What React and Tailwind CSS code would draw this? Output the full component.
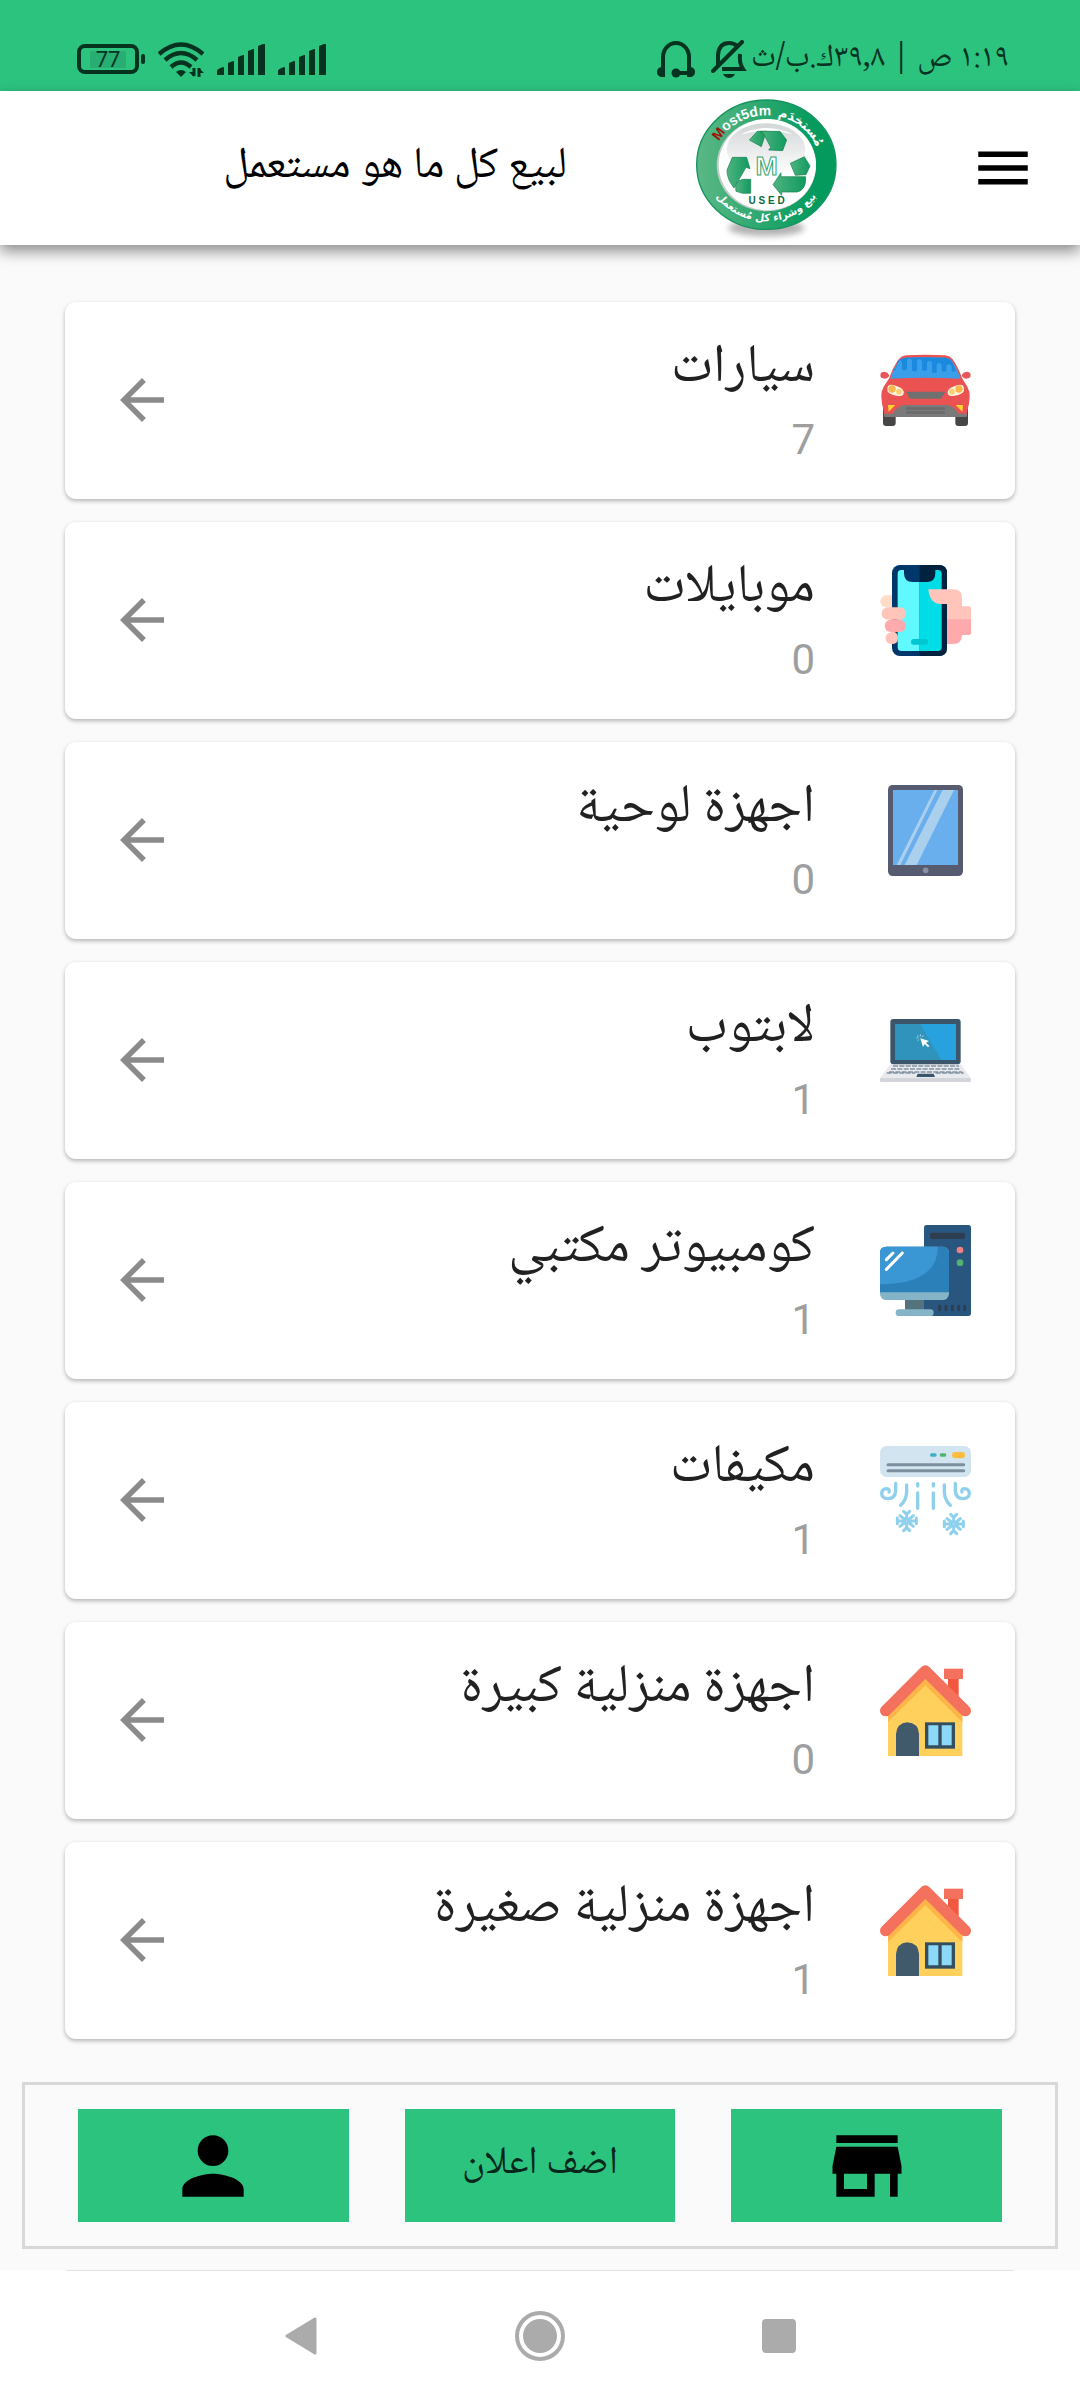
import { MdArrowBack, MdMenu, MdPerson, MdStore } from "react-icons/md";

function Car() {
  return (
    <svg viewBox="60 45 273 273" className="size-[91px] shrink-0" aria-hidden="true">
      <path d="M69 235h38v44q0 9-9 9H78q-9 0-9-9zM286 235h38v44q0 9-9 9h-20q-9 0-9-9z" fill="#464646" />
      <path d="M88 138q-6 8-14 8-13 0-13-10 0-11 12-11 12 1 15 13zM305 138q6 8 14 8 13 0 13-10 0-11-12-11-12 1-15 13z" fill="#e8575c" />
      <path d="M88 144q12-34 28-56 8-10 22-12 58-4 118 0 14 2 22 12 16 22 28 56l16 26q8 14 7 30-1 22-7 42l-2 18H73l-2-18q-6-20-7-42-1-16 7-30z" fill="#eb5252" />
      <path d="M91 146q10-32 26-54 7-8 18-9 61-3 122 0 11 1 18 9 16 22 26 54-104-6-210 0z" fill="#3a9fea" />
      <path d="M105 122q4-20 15-33 6-5 15-6 61-3 122 0 9 1 15 6 9 13 15 33-10 6-12 0v-14q-8-12-16 0v14q-6 6-14 0v-18q-8-12-15 0v22q-6 6-14 0v-28q-7-12-15 0v22q-7 6-15 0v-27q-8-12-15 0v28q-8 8-15 0v-30q-8-12-15 0v26q-8 8-15 0v-22q-8-10-15 0v15q-8 10-16 7z" fill="#1b8ade" />
      <path d="M82 182q-2-22 18-17 20 5 27 13 6 6 3 15-3 8-20 4-24-4-28-15zM312 182q2-22-18-17-20 5-27 13-6 6-3 15 3 8 20 4 24-4 28-15z" fill="#fff6df" />
      <circle cx="96" cy="177" r="11" fill="#ffb74b" /><circle cx="117" cy="185" r="8.500" fill="#ffd071" />
      <circle cx="297" cy="177" r="11" fill="#ffb74b" /><circle cx="276" cy="185" r="8.500" fill="#ffd071" />
      <path d="M138 185h118l-13 21h-93z" fill="#707070" />
      <path d="M71 251h27q16-26 37-26h124q21 0 37 26h26l-3 10H75z" fill="#7a7a7a" />
      <path d="M138 232h117v7H138zM138 244h117v7H138z" fill="#6a6a6a" />
      <path d="M84 225h22l-20 20zM309 225h-22l20 20z" fill="#ffd52e" />
    </svg>
  );
}

function Phone() {
  return (
    <svg viewBox="60 705 273 273" className="size-[91px] shrink-0" aria-hidden="true">
      <rect x="61" y="796" width="64" height="36" rx="18" fill="#ffdcc8" />
      <rect x="96" y="705" width="165" height="273" rx="24" fill="#00376b" />
      <path d="M179 705h58q24 0 24 24v225q0 24-24 24h-58z" fill="#00223f" />
      <path d="M124 720h8v10q0 26 26 26h21v207h-55q-11 0-11-11V731q0-11 11-11z" fill="#60f9ff" />
      <path d="M226 720h8q11 0 11 11v221q0 11-11 11h-55V756h21q26 0 26-26z" fill="#00dde7" />
      <rect x="153" y="927" width="51" height="17" rx="8" fill="#00c6d2" />
      <rect x="65" y="832" width="73" height="37" rx="18" fill="#ffc4ba" />
      <rect x="74" y="869" width="64" height="37" rx="18" fill="#ffabad" />
      <path d="M96 906h8q10 5 10 18 0 18-18 18-19 0-19-18 0-15 19-18z" fill="#ffc4ba" />
      <path d="M205 778h76q25 0 25 26v25h21q6 0 6 6v35h-72v-48h-22q-30-2-34-44z" fill="#ffc4ba" />
      <path d="M261 868h72v41q0 6-6 6h-21q0 27-27 27h-18z" fill="#ffabad" />
    </svg>
  );
}

function Tablet() {
  return (
    <svg viewBox="60 45 273 273" className="size-[91px] shrink-0" aria-hidden="true">
      <rect x="84" y="45" width="225" height="273" rx="14" fill="#575b70" />
      <rect x="99" y="60" width="195" height="225" fill="#69afed" />
      <path d="M223 60h9L121 285h-11zM248 60h34L170 285h-36z" fill="#abd0ed" />
      <circle cx="197" cy="301" r="8.500" fill="#8a90a3" />
    </svg>
  );
}

function Laptop() {
  return (
    <svg viewBox="60 705 273 273" className="size-[91px] shrink-0" aria-hidden="true">
      <path d="M91 883h211l31 42H60z" fill="#e9eaee" />
      <rect x="60" y="924" width="273" height="12" rx="4" fill="#d3d5da" />
      <rect x="91" y="747" width="211" height="136" rx="9" fill="#3b566b" />
      <path d="M106 762h182v108H106z" fill="#28a2df" />
      <path d="M106 762h75l63 108H106z" fill="#2f93bc" />
      <path d="M99 888h198M93 897h208M87 906h220M80 909h86M227 909h84" stroke="#8294a3" strokeWidth="5" strokeDasharray="15 4" fill="none" />
      <path d="M173 911h48l4 10h-56z" fill="#3b566b" />
      <path d="M181 805l26 8-9 5 10 10-4 4-10-10-5 9z" fill="#fff" />
      <path d="M181 792v7M190 796l-3 5M172 796l3 5M169 804h6M173 812l4-3" stroke="#b9dcea" strokeWidth="2.500" />
    </svg>
  );
}

function Desktop() {
  return (
    <svg viewBox="60 75 273 273" className="size-[91px] shrink-0" aria-hidden="true">
      <rect x="192" y="75" width="141" height="273" rx="8" fill="#28567f" />
      <rect x="210" y="98" width="105" height="19" rx="5" fill="#2c3e50" />
      <circle cx="300" cy="150" r="10" fill="#f08183" />
      <circle cx="300" cy="188" r="10" fill="#52b173" />
      <path d="M239 319v10M258 319v10M277 319v10M296 319v10M314 319v10" stroke="#2c3e50" strokeWidth="9" strokeLinecap="round" />
      <path d="M135 298h57v34h-57z" fill="#54737c" />
      <path d="M192 298h28v34h-28z" fill="#28567f" />
      <rect x="60" y="140" width="207" height="160" rx="19" fill="#85b3c8" />
      <path d="M60 277V159q0-19 19-19h169q19 0 19 19v118z" fill="#2b80b9" />
      <path d="M60 253v-94q0-19 19-19h155q-2 112-174 113z" fill="#3b97d3" />
      <path d="M79 179l20-20M79 208l48-49" stroke="#fff" strokeWidth="9" strokeLinecap="round" />
      <rect x="107" y="328" width="114" height="20" rx="10" fill="#85b3c8" />
    </svg>
  );
}

function AirConditioner() {
  return (
    <svg viewBox="60 735 273 273" className="size-[91px] shrink-0" aria-hidden="true">
      <rect x="60" y="738" width="273" height="93" rx="20" fill="#d1e4ef" />
      <path d="M84 794h227M84 812h227" stroke="#7c8f9f" strokeWidth="9" strokeLinecap="round" />
      <path d="M215 765h10" stroke="#3fafc6" strokeWidth="10" strokeLinecap="round" />
      <path d="M244 765h10" stroke="#52b173" strokeWidth="10" strokeLinecap="round" />
      <rect x="276" y="756" width="39" height="19" rx="9" fill="#fdbd40" />
      <g fill="none" stroke="#8fd0ec" strokeWidth="10" strokeLinecap="round" strokeLinejoin="round">
        <path d="M107 850v22q-1 24-23 24-19-1-19-17 1-12 15-13 10 1 7 10M286 850v22q1 24 23 24 19-1 19-17-1-12-15-13-10 1-7 10" />
        <path d="M140 855v22q-2 24-18 39M253 855v22q2 24 18 39M173 851v7M173 879v46M220 851v7M220 879v46" />
      </g>
      <g fill="none" stroke="#8fd0ec" strokeWidth="9" strokeLinecap="round" strokeLinejoin="round">
        <path id="flake" d="M140 944v12M140 970v12M114 963h18M150 963h18M120 947l13 10M148 969l12 10M160 947l-12 10M133 969l-13 10M131 934l9 9 9-9M131 992l9-9 9 9M112 954v17M169 954v17" />
        <circle cx="140" cy="963" r="6" />
        <use href="#flake" x="141" y="9" />
        <circle cx="281" cy="972" r="6" />
      </g>
    </svg>
  );
}

function House() {
  return (
    <svg viewBox="60 75 273 273" className="size-[91px] shrink-0" aria-hidden="true">
      <path d="M264 114h32v60l-32-30z" fill="#f2573f" />
      <rect x="252" y="86" width="57" height="31" fill="#f4725d" />
      <path d="M84 222L196 110l111 112v126H84z" fill="#ffd05b" />
      <path d="M84 222L196 115l111 107v25L196 136 84 246z" fill="#fdb54a" />
      <path d="M77 212L196 93l120 119" fill="none" stroke="#f4725d" strokeWidth="34" strokeLinecap="round" strokeLinejoin="round" />
      <path d="M108 348v-66q2-32 34-35 33 2 35 35v66z" fill="#415a6b" />
      <rect x="195" y="247" width="90" height="79" fill="#344e5e" />
      <path d="M205 256h30v60h-30zM245 256h30v60h-30z" fill="#8cd8f8" />
    </svg>
  );
}

function Logo() {
  return (
    <svg viewBox="48 24 426 435" className="h-[145px] w-[142px] shrink-0" role="img" aria-label="Most5dm">
      <defs>
        <linearGradient id="ring"><stop offset="0" stopColor="#5bb885" /><stop offset="0.85" stopColor="#049a5d" /></linearGradient>
        <linearGradient id="leaf"><stop offset="0" stopColor="#4fb37f" /><stop offset="1" stopColor="#109a5f" /></linearGradient>
        <linearGradient id="glass" x2="0" y2="1"><stop offset="0" stopColor="#d3d6d7" /><stop offset="1" stopColor="#fff" /></linearGradient>
        <filter id="soft" x="-30%" y="-80%" width="160%" height="260%"><feGaussianBlur stdDeviation="10" /></filter>
        <path id="topArc" d="M98 224a161 148 0 0 1 322 0" />
        <path id="bottomArc" d="M78 224a181 170 0 0 0 362 0" />
      </defs>
      <ellipse cx="259" cy="414" rx="115" ry="24" fill="#000" opacity="0.3" filter="url(#soft)" />
      <ellipse cx="259" cy="224" rx="209" ry="194" fill="url(#ring)" stroke="#12945e" strokeWidth="4" />
      <ellipse cx="259" cy="226" rx="149" ry="138" fill="#c2cbc7" />
      <ellipse cx="262" cy="224" rx="146" ry="137" fill="#fff" />
      <ellipse cx="258" cy="178" rx="118" ry="78" fill="url(#glass)" />
      <path d="M180 134q80-40 160 0-80-24-160 0z" fill="#fff" />
      <g fill="url(#leaf)" stroke="#15824f" strokeWidth="2">
        <path d="M208 150l24-26h27l-15 46z" /><path d="M240 124h60l20 26-12 32-42-2 6-8-22-42z" />
        <path d="M141 240l16-38h43l10 34-12-4-24 42-12 20q-22-28-21-54z" /><path d="M168 304q-6-30 20-36h24v42h-24z" />
        <path d="M331 220l42-20 17 28-12 26-32 2z" /><path d="M279 284l24-36v12h74q2 40-26 46h-46v10z" />
      </g>
      <text x="260" y="254" textAnchor="middle" className="font-['Liberation_Sans'] text-[80px] font-bold" fill="#fff" stroke="#32a574" strokeWidth="3">M</text>
      <text x="260" y="343" textAnchor="middle" className="font-['Liberation_Sans'] text-[30px] font-bold" fill="#0d6b3e">U S E D</text>
      <text className="font-['Liberation_Sans'] text-[42px] font-bold" fill="#fff" direction="ltr">
        <textPath href="#topArc" startOffset="15%"><tspan fill="#a30f08">M</tspan>ost5dm</textPath>
      </text>
      <text className="font-['DejaVu_Sans'] text-[38px] font-bold" fill="#fff" textAnchor="middle" direction="ltr">
        <textPath href="#topArc" startOffset="73%">مُستخدَم</textPath>
      </text>
      <text className="font-['DejaVu_Sans'] text-[31px] font-bold" fill="#fff" textAnchor="middle" direction="ltr">
        <textPath href="#bottomArc" startOffset="50%">بيع وشراء كل مُستعمل</textPath>
      </text>
    </svg>
  );
}

function Signal() {
  return (
    <svg viewBox="0 0 48 31" className="h-[31px] w-12" fill="#06331f" aria-hidden="true">
      <path d="M0 31v-4q0-2 6-4 1 0 1 1v7zM11 31V19l5-2h1v14zM21 31V13l5-2h1v20zM31 31V7l5-2h1v26zM41 31V2l5-2h2v31z" />
    </svg>
  );
}

function StatusBar() {
  return (
    <div className="flex h-[91px] items-center bg-[#2cc37f] pt-[27px] pr-[71px] pl-[77px] text-[#06331f]">
      <span className="text-[32px] leading-[48px]">١:١٩ ص | ٣٩,٨ك.ب/ث</span>
      <svg viewBox="0 0 36 38" className="mr-1 h-[38px] w-9" fill="none" stroke="currentColor" aria-hidden="true">
        <path d="M7 27V15Q8 3 18 3q5 0 8 3M29 14q-1 9 3 15H11" strokeWidth="4" />
        <path d="M2 31L31 2" strokeWidth="4" strokeLinecap="round" />
        <path d="M12 34h12q-2 4-6 4t-6-4z" fill="currentColor" stroke="none" />
      </svg>
      <svg viewBox="0 0 38 37" className="mr-4 h-[37px] w-[38px]" fill="none" stroke="currentColor" aria-hidden="true">
        <path d="M6 28V16a13 14 0 0 1 26 0v12" strokeWidth="4" />
        <path d="M19 32h15" strokeWidth="4" />
        <path d="M4 26h4v10H4q-4-1-4-5t4-5zM34 26h-4v10h4q4-1 4-5t-4-5z" fill="currentColor" stroke="none" />
        <circle cx="19" cy="32" r="4.500" fill="currentColor" stroke="none" />
      </svg>
      <div className="mr-auto flex items-center gap-[13px]">
        <Signal />
        <Signal />
        <svg viewBox="0 0 46 35" className="h-[35px] w-[46px]" fill="none" stroke="currentColor" strokeWidth="4.500" aria-hidden="true">
          <path d="M1 12Q23-7 45 12M7 18q16-14 32 0M13 25q10-9 20 0" />
          <path d="M18 30q5-4 10 0l-5 5z" fill="currentColor" stroke="none" />
          <path d="M36 26v8M41 26v9" strokeWidth="3" />
          <path d="M31 30l5 5v-5zM46 31l-5-5v5z" fill="currentColor" stroke="none" />
        </svg>
        <div className="flex items-center gap-0.5" dir="ltr">
          <div className="flex h-[30px] w-[62px] items-center justify-center rounded-lg border-4 border-[#06331f]">
            <span className="w-9 bg-[#28ae72] text-center font-['Roboto'] text-[22px] leading-[17px]">77</span>
          </div>
          <div className="h-[10px] w-1 rounded-sm bg-[#06331f]" />
        </div>
      </div>
    </div>
  );
}

const categories = [
  { title: "سيارات", count: 7, Icon: Car },
  { title: "موبايلات", count: 0, Icon: Phone },
  { title: "اجهزة لوحية", count: 0, Icon: Tablet },
  { title: "لابتوب", count: 1, Icon: Laptop },
  { title: "كومبيوتر مكتبي", count: 1, Icon: Desktop },
  { title: "مكيفات", count: 1, Icon: AirConditioner },
  { title: "اجهزة منزلية كبيرة", count: 0, Icon: House },
  { title: "اجهزة منزلية صغيرة", count: 1, Icon: House },
];

export default function App() {
  return (
    <div dir="rtl" className="flex min-h-screen flex-col bg-[#fafafa] font-['Noto_Naskh_Arabic','Noto_Sans_Arabic','Roboto','DejaVu_Sans',sans-serif]">
      <StatusBar />
      <header className="z-10 flex h-[154px] items-center bg-white pr-11 shadow-[0_6px_14px_rgba(0,0,0,0.45)]">
        <button aria-label="القائمة"><MdMenu className="size-[66px]" /></button>
        <div className="mt-1 mr-[132px]"><Logo /></div>
        <h1 className="mr-[129px] text-[44px] leading-[60px] text-black">لبيع كل ما هو مستعمل</h1>
      </header>

      <ul className="flex grow flex-col gap-[23px] px-[65px] pt-[57px] pb-[22px]">
        {categories.map(({ title, count, Icon }) => (
          <li key={title}>
            <a href="#" className="flex items-center rounded-[11px] bg-white px-11 pt-7 pb-[34px] shadow-[0_2px_4px_rgba(0,0,0,0.28)]">
              <span className="self-start pt-[15px]"><Icon /></span>
              <span className="mr-[65px] flex grow flex-col gap-[7px]">
                <span className="text-[54px] leading-[78px] text-[#212121]">{title}</span>
                <span className="font-['Roboto'] text-[42px] leading-[50px] text-[#9e9e9e]">{count}</span>
              </span>
              <MdArrowBack className="mt-1 size-[66px] shrink-0 text-[#8b8b8b]" />
            </a>
          </li>
        ))}
      </ul>

      <div className="px-[22px] pt-[20px] pb-[21px]">
        <div className="grid grid-cols-3 gap-14 border-3 border-[#d8d8d8] px-[53px] py-6">
          <button aria-label="المتجر" className="flex h-[113px] items-center justify-center bg-[#2cc37f]"><MdStore className="size-[92px]" /></button>
          <button className="flex h-[113px] items-center justify-center bg-[#2cc37f] text-[39px] text-[#06271a]">اضف اعلان</button>
          <button aria-label="حسابي" className="flex h-[113px] items-center justify-center bg-[#2cc37f]"><MdPerson className="size-[92px]" /></button>
        </div>
      </div>

      <nav className="bg-white">
        <div className="mx-[66px] h-px bg-[#e2e2e2]" />
        <div className="flex h-[129px] items-center justify-center gap-[190px]">
          <button aria-label="التطبيقات" className="flex w-12 justify-center"><span className="size-[34px] rounded-sm bg-[#ababab]" /></button>
          <button aria-label="الرئيسية">
            <svg viewBox="0 0 50 50" className="size-[50px]"><circle cx="25" cy="25" r="23" fill="none" stroke="#ababab" strokeWidth="4" /><circle cx="25" cy="25" r="17" fill="#ababab" /></svg>
          </button>
          <button aria-label="رجوع" className="flex w-12 justify-center">
            <svg viewBox="0 0 32 38" className="h-[38px] w-8"><path d="M2 19L30 2v34z" fill="#ababab" stroke="#ababab" strokeWidth="3" strokeLinejoin="round" /></svg>
          </button>
        </div>
      </nav>
    </div>
  );
}
